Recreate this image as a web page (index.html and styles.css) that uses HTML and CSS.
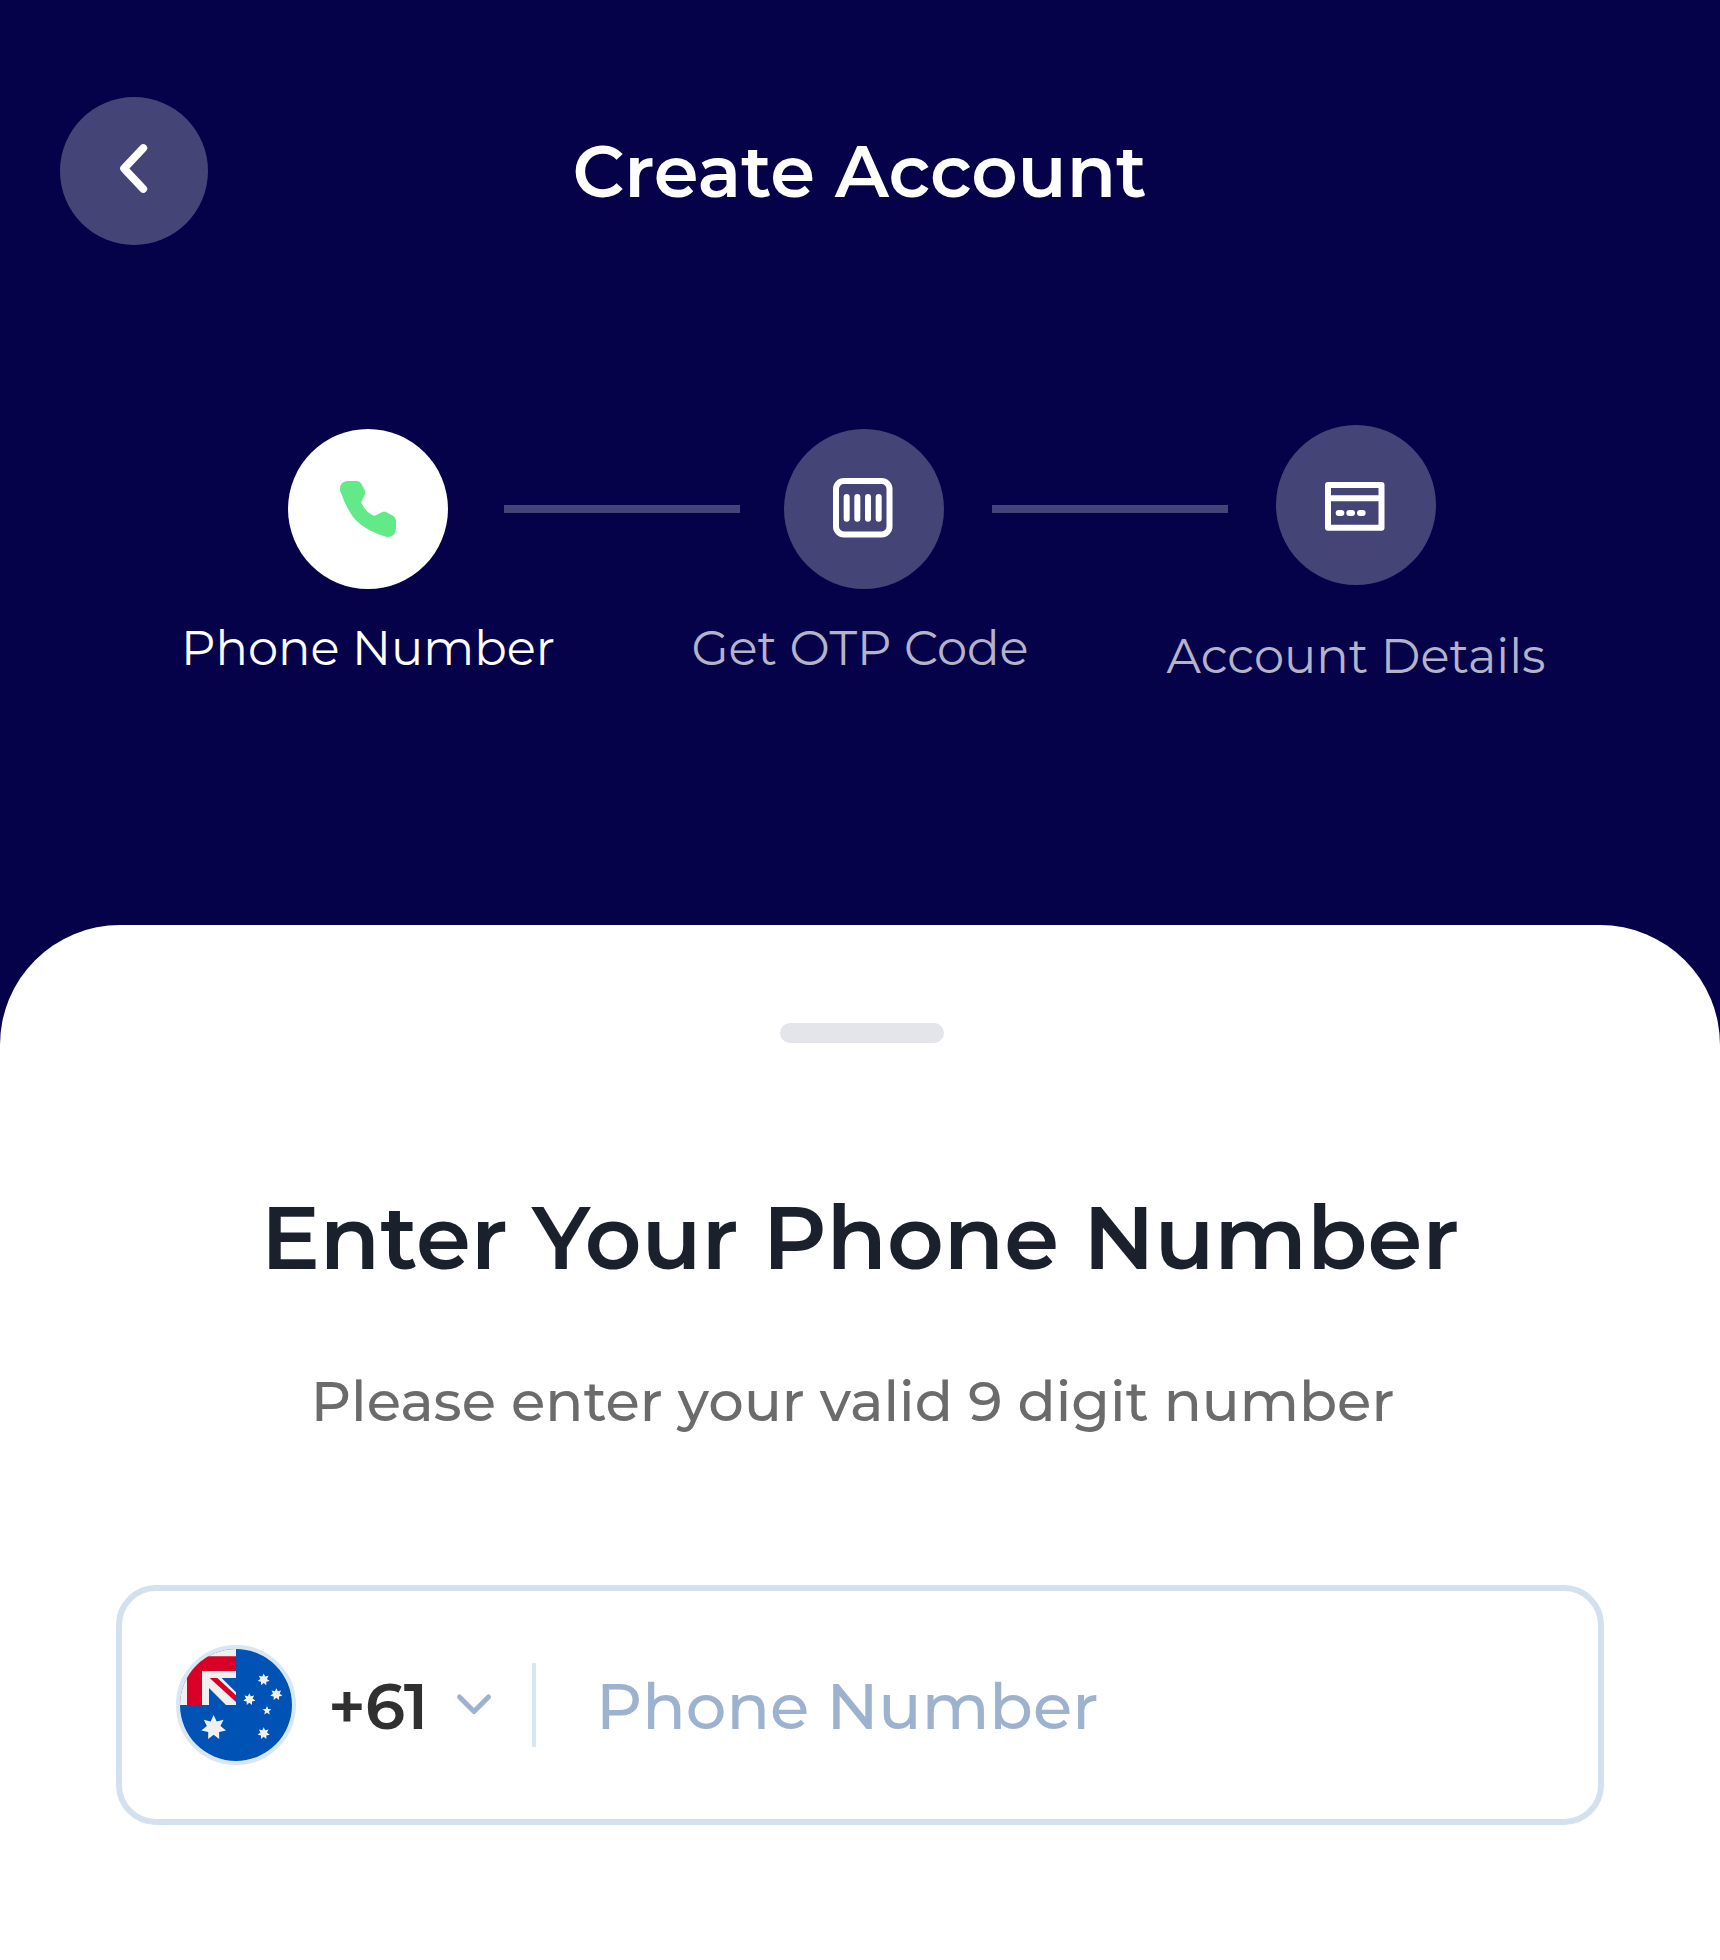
FILE: index.html
```
<!DOCTYPE html>
<html lang="en">
<head>
<meta charset="utf-8">
<title>Create Account</title>
<link rel="stylesheet" href="styles.css">
</head>
<body>
<div class="screen">
  <header class="header">
    <button class="back" aria-label="Back">
      <svg viewBox="60 51 444 444"><path d="M310 204L252 265.500L310 327" fill="none" stroke="#fff" stroke-width="23" stroke-linecap="round" stroke-linejoin="round"/></svg>
    </button>
    <h1 class="title">Create Account</h1>
  </header>

  <nav class="steps">
    <div class="step step-active">
      <span class="step-icon">
        <svg viewBox="54 57 480 480"><path fill="#62ea88" d="M232 213H260Q269 213 273 220L284 240Q287 245 285 252L275 274Q273 278 276 283Q288 306 308 316Q313 318 317 316L337 306Q342 303 348 306L370 318Q378 323 378 331V355Q377 382 350 381Q287 362 257 330Q230 300 210 241Q208 216 232 213Z"/></svg>
      </span>
      <span class="step-label">Phone Number</span>
    </div>
    <span class="line line-first"></span>
    <div class="step step-otp">
      <span class="step-icon">
        <svg viewBox="42 57 480 480" fill="none" stroke="#fff" stroke-width="18" stroke-linecap="round"><rect x="198" y="213" width="160.500" height="160.500" rx="24"/><path d="M230 261V326M262 261V326M294 261V326M326 261V326"/></svg>
      </span>
      <span class="step-label">Get OTP Code</span>
    </div>
    <span class="line line-second"></span>
    <div class="step step-details">
      <span class="step-icon">
        <svg viewBox="48 45 480 480" fill="none" stroke="#fff" stroke-width="18" stroke-linecap="round" stroke-linejoin="round"><path d="M204 225H364.500V353H204ZM204 264.500H364.500M236 309H244M268 309H276M300 309H308"/></svg>
      </span>
      <span class="step-label">Account Details</span>
    </div>
  </nav>

  <main class="sheet">
    <span class="handle"></span>
    <h2 class="heading">Enter Your Phone Number</h2>
    <p class="hint">Please enter your valid 9 digit number</p>
    <div class="field">
      <span class="flag">
        <svg viewBox="60 57 336 336">
          <defs>
            <path id="star7" d="M0 -1L.239 -.496L.782 -.623L.536 -.122L.975 .223L.430 .343L.434 .901L0 .550L-.434 .901L-.430 .343L-.975 .223L-.536 -.122L-.782 -.623L-.239 -.496Z"/>
          </defs>
          <path fill="#0052b4" d="M60 57H396V393H60Z"/>
          <path fill="#f0f0f0" d="M60 57H228V225H60Z"/>
          <path fill="#d80027" d="M81 79H228V123H126V225H81Z"/>
          <path fill="#0052b4" d="M185 144H228V187ZM147 174V225H198Z"/>
          <path fill="#d80027" d="M149 144H172L228 196V216Z"/>
          <g fill="#f0f0f0">
            <use href="#star7" transform="translate(161 293) scale(38)"/>
            <use href="#star7" transform="translate(311 149) scale(18.500)"/>
            <use href="#star7" transform="translate(268 208) scale(18.500)"/>
            <use href="#star7" transform="translate(349 193) scale(18.500)"/>
            <use href="#star7" transform="translate(311 310) scale(18.500)"/>
            <path transform="translate(321 242) scale(14)" d="M0 -1L.264 -.364L.951 -.309L.428 .139L.588 .809L0 .450L-.588 .809L-.428 .139L-.951 -.309L-.264 -.364Z"/>
          </g>
        </svg>
      </span>
      <span class="code">+61</span>
      <svg class="chevron" viewBox="0 0 40 24"><path d="M5.500 4L20 18.500L34.500 4" fill="none" stroke="#9db2ce" stroke-width="5" stroke-linecap="round" stroke-linejoin="round"/></svg>
      <span class="divider"></span>
      <input class="phone" type="tel" placeholder="Phone Number" aria-label="Phone Number">
    </div>
  </main>
</div>
</body>
</html>
```
FILE: styles.css
```
* { box-sizing: border-box; }

body {
  margin: 0;
  background: #06024a;
  font-family: Montserrat, Inter, sans-serif;
}

svg { display: block; }

.screen {
  display: flex;
  flex-direction: column;
  width: 1720px;
  height: 1960px;
  overflow: hidden;
}

.header {
  display: grid;
  grid-template-columns: 148px 1fr 148px;
  align-items: center;
  padding: 97px 61px 0 60px;
}

.back {
  width: 148px;
  height: 148px;
  padding: 0;
  border: 0;
  border-radius: 50%;
  background: #454477;
}

.title {
  margin: 0;
  color: #fff;
  font-size: 72px;
  font-weight: 600;
  line-height: 88px;
  text-align: center;
}

.steps {
  display: flex;
  align-items: flex-start;
  height: 500px;
  margin-top: 180px;
  padding-left: 288px;
}

.step {
  display: flex;
  flex: none;
  flex-direction: column;
  align-items: center;
  gap: 29px;
  width: 160px;
  margin-top: 4px;
}

.step-icon {
  width: 160px;
  height: 160px;
  border-radius: 50%;
  background: #454477;
}

.step-label {
  color: #b4b3c8;
  font-size: 48px;
  line-height: 60px;
  white-space: nowrap;
}

.step-active .step-icon { background: #fff; }
.step-active .step-label { color: #fff; }
.step-otp .step-label { margin-left: -8px; }
.step-details { gap: 41px; margin-top: 0; }

.line {
  flex: none;
  width: 236px;
  height: 8px;
  margin-top: 80px;
  background: #454477;
}

.line-first { margin-right: 44px; margin-left: 56px; }
.line-second { margin-right: 48px; margin-left: 48px; }

.sheet {
  display: flex;
  flex: none;
  flex-direction: column;
  align-items: center;
  height: 1035px;
  padding-top: 98px;
  border-radius: 120px 120px 0 0;
  background: #fff;
}

.handle {
  width: 164px;
  height: 20px;
  margin-left: 4px;
  border-radius: 10px;
  background: #e4e5ea;
}

.heading {
  margin: 141px 0 0;
  color: #1b202d;
  font-size: 88px;
  font-weight: 600;
  line-height: 108px;
}

.hint {
  margin: 74px 15px 0 0;
  color: #6b6b6b;
  font-size: 56px;
  font-weight: 500;
  line-height: 70px;
}

.field {
  display: flex;
  align-items: center;
  width: 1488px;
  height: 240px;
  margin-top: 149px;
  padding-left: 54px;
  border: 6px solid #d3e1ef;
  border-radius: 40px;
}

.flag {
  flex: none;
  width: 120px;
  height: 120px;
  overflow: hidden;
  border: 4px solid #d9e6f4;
  border-radius: 50%;
}

.code {
  width: 126px;
  margin-left: 32px;
  padding-top: 2px;
  color: #303030;
  font-size: 64px;
  font-weight: 600;
  letter-spacing: -1.2px;
  line-height: 78px;
}

.chevron { width: 40px; height: 24px; }

.divider {
  width: 4px;
  height: 84px;
  margin-left: 38px;
  background: #d9e7f4;
}

.phone {
  width: 900px;
  margin-left: 60px;
  padding: 2px 0 0;
  border: 0;
  outline: 0;
  background: none;
  color: #303030;
  font: 500 64px/78px Montserrat, Inter, sans-serif;
}

.phone::placeholder { color: #9db2ce; opacity: 1; }
```
